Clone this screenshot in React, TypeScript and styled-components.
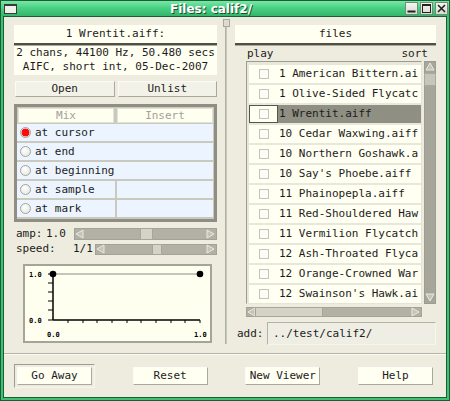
import React from 'react';
import styled, { createGlobalStyle } from 'styled-components';

const mono = `"DejaVu Sans Mono", "Liberation Mono", monospace`;

const GlobalStyle = createGlobalStyle`
  html, body {
    margin: 0;
    padding: 0;
    background: #ffffff;
  }
  body {
    font-family: ${mono};
    font-size: 11px;
    color: #1c1c1c;
  }
  * {
    box-sizing: border-box;
  }
`;

const Frame = styled.div`
  width: 450px;
  height: 401px;
  display: flex;
  flex-direction: column;
  background: #3fc174;
  border: 1px solid #1b5e36;
  padding: 0 2px 2px;
`;

const TitleBar = styled.div`
  height: 15px;
  margin: 0 -2px;
  padding: 0 1px 0 3px;
  display: flex;
  align-items: center;
  background: linear-gradient(#7ae8a6, #4ad184 45%, #33b56a);
`;

const WinIcon = styled.div`
  width: 13px;
  height: 10px;
  border: 1px solid #3a3a3a;
  border-top-width: 2px;
  background: #f0f0ea;
`;

const Title = styled.div`
  flex: 1;
  text-align: center;
  font-family: "DejaVu Sans", "Liberation Sans", sans-serif;
  font-weight: bold;
  font-size: 12px;
  color: #ffffff;
  text-shadow: 1px 1px 0 #1f4d30;
`;

const WinButtons = styled.div`
  display: flex;
  gap: 2px;
`;

const WinButton = styled.div`
  width: 13px;
  height: 13px;
  border: 1px solid #6b8f78;
  background: linear-gradient(#f6f6f0, #d9d9d0);
  display: flex;
  align-items: center;
  justify-content: center;
`;

const Body = styled.div`
  flex: 1;
  min-height: 0;
  display: flex;
  flex-direction: column;
  background: #edecdf;
  border: 1px solid #1b5e36;
`;

const Top = styled.div`
  height: 336px;
  display: flex;
  padding: 8px 9px 0 10px;
`;

const Column = styled.div<{ $width: number }>`
  width: ${(p) => p.$width}px;
  display: flex;
  flex-direction: column;
`;

const Heading = styled.div`
  height: 18px;
  line-height: 18px;
  text-align: center;
  background: #fffff2;
`;

const DoubleRule = styled.div`
  height: 3px;
  border-top: 2px solid #4f4f48;
  border-bottom: 1px solid #a9a99c;
`;

const Info = styled.div`
  height: 29px;
  line-height: 14px;
  text-align: center;
  background: #fffff2;
  white-space: nowrap;
`;

const ButtonPair = styled.div`
  margin-top: 6px;
  padding-left: 1px;
  display: grid;
  grid-template-columns: 1fr 1fr;
  gap: 3px;
`;

const FlatButton = styled.div`
  height: 16px;
  line-height: 14px;
  text-align: center;
  background: #f3f2e8;
  border: 1px solid;
  border-color: #fbfbf6 #a8a89c #a8a89c #fbfbf6;
`;

const Panel = styled.div`
  margin-top: 7px;
  height: 118px;
  border: 3px solid #8e8e84;
  background: #c9c9bd;
  padding: 1px;
  display: flex;
  flex-direction: column;
  gap: 2px;
`;

const PanelHead = styled.div`
  display: grid;
  grid-template-columns: 1fr 1fr;
  gap: 3px;
  margin-bottom: -1px;
`;

const HeadCell = styled.div`
  height: 15px;
  line-height: 14px;
  text-align: center;
  color: #a2a296;
  background: #fffff0;
  border: 1px solid #e2e2d6;
`;

const ModeRow = styled.div<{ $split?: boolean }>`
  height: 17px;
  display: grid;
  grid-template-columns: ${(p) => (p.$split ? '98px 1fr' : '1fr')};
  gap: 2px;
  margin-left: -1px;
`;

const ModeCell = styled.div`
  background: #ecf4ff;
  display: flex;
  align-items: center;
  padding-left: 3px;
  gap: 4px;
`;

const Radio = styled.span<{ $on?: boolean }>`
  width: 11px;
  height: 11px;
  border-radius: 50%;
  border: 1px solid #a4a49a;
  background: ${(p) =>
    p.$on
      ? 'radial-gradient(circle, #ff0a0a 0 3.6px, #f2dada 4.2px)'
      : 'radial-gradient(circle at 40% 35%, #ffffff, #e2e2dc)'};
`;

const SliderRow = styled.div<{ $top: number }>`
  margin-top: ${(p) => p.$top}px;
  display: flex;
  align-items: center;
  padding-left: 2px;
  white-space: pre;
`;

const Label = styled.span<{ $width: number }>`
  width: ${(p) => p.$width}px;
  line-height: 12px;
`;

const Value = styled.span<{ $width: number }>`
  width: ${(p) => p.$width}px;
  line-height: 12px;
`;

const Trough = styled.div<{ $width: number; $height: number }>`
  position: relative;
  width: ${(p) => p.$width}px;
  height: ${(p) => p.$height}px;
  background: #b1b1a5;
  border: 1px solid #a2a296;
  display: flex;
  justify-content: space-between;
  align-items: center;
`;

const Thumb = styled.div<{ $left: number; $size: number }>`
  position: absolute;
  top: -1px;
  bottom: -1px;
  left: ${(p) => p.$left}px;
  width: ${(p) => p.$size}px;
  background: #d3d3c7;
  border: 1px solid #a6a69a;
`;

const VTrough = styled.div`
  position: relative;
  width: 12px;
  background: #a6a69a;
  border: 1px solid #9c9c90;
  display: flex;
  flex-direction: column;
  justify-content: space-between;
  align-items: center;
`;

const VThumb = styled.div`
  position: absolute;
  left: -1px;
  right: -1px;
  top: 11px;
  height: 13px;
  background: #c6c6ba;
  border: 1px solid #aaa99e;
`;

const GraphBox = styled.div`
  margin: 9px 0 0 9px;
  width: 189px;
  height: 79px;
  background: #fffff0;
  border: 2px solid #a4a498;
`;

const Splitter = styled.div`
  width: 18px;
  margin-top: -6px;
  padding-bottom: 9px;
  display: flex;
  flex-direction: column;
  align-items: center;
`;

const Knob = styled.div`
  width: 7px;
  height: 8px;
  background: #dcdcd2;
  border: 1px solid #a8a89c;
`;

const SplitLine = styled.div`
  flex: 1;
  width: 2px;
  background: #c6c6ba;
  border-left: 1px solid #b0b0a4;
`;

const PlaySort = styled.div`
  height: 15px;
  line-height: 15px;
  padding: 0 8px 0 12px;
  display: flex;
  justify-content: space-between;
`;

const ListArea = styled.div`
  height: 243px;
  padding-left: 11px;
  display: flex;
  gap: 2px;
`;

const FileList = styled.div`
  width: 176px;
  background: #e7e7db;
  border: 1px solid;
  border-color: #9c9c90 #e4e4d8 #e4e4d8 #9c9c90;
  padding: 3px 0 0 2px;
  display: flex;
  flex-direction: column;
  gap: 2px;
  overflow: hidden;
`;

const FileRow = styled.div<{ $selected?: boolean }>`
  flex: none;
  height: 18px;
  display: grid;
  grid-template-columns: 29px 1fr;
  background: ${(p) => (p.$selected ? '#8f8f83' : '#fffff2')};
`;

const CheckCell = styled.div<{ $selected?: boolean }>`
  display: flex;
  align-items: center;
  justify-content: center;
  background: #fffff2;
  border: 1px solid ${(p) => (p.$selected ? '#55554d' : 'transparent')};
`;

const Check = styled.span`
  width: 10px;
  height: 10px;
  border: 1px solid #c4c4b8;
  background: #fcfcf6;
`;

const FileName = styled.div`
  padding-left: 1px;
  line-height: 18px;
  white-space: pre;
  overflow: hidden;
`;

const HScroll = styled.div`
  margin: 3px 0 0 11px;
`;

const AddRow = styled.div`
  margin-top: 5px;
  height: 23px;
  display: flex;
  align-items: center;
  padding-left: 2px;
`;

const AddLabel = styled.span`
  width: 30px;
`;

const AddInput = styled.div`
  flex: 1;
  height: 23px;
  line-height: 21px;
  padding-left: 5px;
  background: #efeee4;
  border: 1px solid;
  border-color: #b2b2a6 #f6f6ee #f6f6ee #b2b2a6;
`;

const HRule = styled.div`
  height: 2px;
  border-top: 1px solid #b4b4a8;
  border-bottom: 1px solid #fafaf4;
`;

const ButtonBar = styled.div`
  flex: 1;
  display: flex;
  align-items: center;
  justify-content: space-between;
  padding: 0 13px 0 10px;
`;

const DefaultRing = styled.div`
  padding: 2px;
  border: 1px solid;
  border-color: #9c9c90 #f6f6ee #f6f6ee #9c9c90;
`;

const Button = styled.div`
  width: 75px;
  height: 18px;
  line-height: 16px;
  text-align: center;
  background: #fffff2;
  border: 1px solid;
  border-color: #fdfdf8 #a8a89c #a8a89c #fdfdf8;
  white-space: nowrap;
`;

const Arrow = ({ dir }: { dir: 'left' | 'right' | 'up' | 'down' }) => {
  const pts = {
    left: '8,1 8,9 1,5',
    right: '1,1 1,9 8,5',
    up: '1,8 9,8 5,1',
    down: '1,1 9,1 5,8',
  }[dir];
  return (
    <svg width="10" height="10" viewBox="0 0 10 10">
      <polygon points={pts} fill="#c4c4b8" stroke="#e9e9e1" strokeWidth="1" />
    </svg>
  );
};

const Slider = ({ width, height, pos, size }: { width: number; height: number; pos: number; size: number }) => (
  <Trough $width={width} $height={height}>
    <Arrow dir="left" />
    <Thumb $left={pos} $size={size} />
    <Arrow dir="right" />
  </Trough>
);

const Graph = () => {
  const xTicks = [45, 60, 74, 89, 104, 118, 133, 148, 162, 177];
  const yTicks = [10, 19, 28, 37, 46, 56];
  const tickFont = { fontFamily: mono, fontSize: 7, fontWeight: 'bold' as const };
  return (
    <GraphBox>
      <svg width="185" height="75" viewBox="2 2 185 75">
        <line x1="30" y1="10" x2="177" y2="10" stroke="#8a8a80" strokeWidth="1" />
        <line x1="30" y1="10" x2="30" y2="56" stroke="#000" strokeWidth="1.5" />
        <line x1="30" y1="56" x2="177" y2="56" stroke="#000" strokeWidth="1.5" />
        {yTicks.map((y) => (
          <line key={y} x1="25" y1={y} x2="30" y2={y} stroke="#000" strokeWidth="1" />
        ))}
        {xTicks.map((x) => (
          <line key={x} x1={x} y1="56" x2={x} y2="59" stroke="#000" strokeWidth="1" />
        ))}
        <circle cx="30" cy="10" r="3.3" fill="#000" />
        <circle cx="177" cy="10" r="3.3" fill="#000" />
        <text x="6" y="12.5" {...tickFont}>1.0</text>
        <text x="6" y="58.5" {...tickFont}>0.0</text>
        <text x="24" y="73" {...tickFont}>0.0</text>
        <text x="171" y="73" {...tickFont}>1.0</text>
      </svg>
    </GraphBox>
  );
};

// names as far as the list column shows them
const files = [
  '1 American Bittern.ai',
  '1 Olive-Sided Flycatc',
  '1 Wrentit.aiff',
  '10 Cedar Waxwing.aiff',
  '10 Northern Goshawk.a',
  "10 Say's Phoebe.aiff",
  '11 Phainopepla.aiff',
  '11 Red-Shouldered Haw',
  '11 Vermilion Flycatch',
  '12 Ash-Throated Flyca',
  '12 Orange-Crowned War',
  "12 Swainson's Hawk.ai",
];

const modes = [
  { label: 'at cursor', on: true },
  { label: 'at end' },
  { label: 'at beginning' },
  { label: 'at sample', split: true },
  { label: 'at mark', split: true },
];

export default function App() {
  return (
    <>
      <GlobalStyle />
      <Frame>
        <TitleBar>
          <WinIcon />
          <Title>Files: calif2/</Title>
          <WinButtons>
            <WinButton>
              <svg width="9" height="9" viewBox="0 0 9 9">
                <rect x="0.5" y="6.5" width="8" height="2" fill="#222" />
              </svg>
            </WinButton>
            <WinButton>
              <svg width="9" height="9" viewBox="0 0 9 9">
                <rect x="0.5" y="0.5" width="8" height="8" fill="none" stroke="#222" strokeWidth="1" />
                <rect x="0.5" y="0.5" width="8" height="1.5" fill="#222" />
              </svg>
            </WinButton>
            <WinButton>
              <svg width="9" height="9" viewBox="0 0 9 9">
                <path d="M1 1 L8 8 M8 1 L1 8" stroke="#222" strokeWidth="1.6" />
              </svg>
            </WinButton>
          </WinButtons>
        </TitleBar>
        <Body>
          <Top>
            <Column $width={203}>
              <Heading>1 Wrentit.aiff:</Heading>
              <DoubleRule />
              <Info>
                2 chans, 44100 Hz, 50.480 secs
                <br />
                AIFC, short int, 05-Dec-2007
              </Info>
              <ButtonPair>
                <FlatButton>Open</FlatButton>
                <FlatButton>Unlist</FlatButton>
              </ButtonPair>
              <Panel>
                <PanelHead>
                  <HeadCell>Mix</HeadCell>
                  <HeadCell>Insert</HeadCell>
                </PanelHead>
                {modes.map((m) => (
                  <ModeRow key={m.label} $split={m.split}>
                    <ModeCell>
                      <Radio $on={m.on} />
                      {m.label}
                    </ModeCell>
                    {m.split && <ModeCell />}
                  </ModeRow>
                ))}
              </Panel>
              <SliderRow $top={6}>
                <Label $width={30}>amp:</Label>
                <Value $width={28}>1.0</Value>
                <Slider width={143} height={12} pos={65} size={13} />
              </SliderRow>
              <SliderRow $top={3}>
                <Label $width={57}>speed:</Label>
                <Value $width={22}>1/1</Value>
                <Slider width={122} height={11} pos={56} size={10} />
              </SliderRow>
              <Graph />
            </Column>
            <Splitter>
              <Knob />
              <SplitLine />
            </Splitter>
            <Column $width={201}>
              <Heading>files</Heading>
              <DoubleRule />
              <PlaySort>
                <span>play</span>
                <span>sort</span>
              </PlaySort>
              <ListArea>
                <FileList>
                  {files.map((f) => {
                    const sel = f === '1 Wrentit.aiff';
                    return (
                      <FileRow key={f} $selected={sel}>
                        <CheckCell $selected={sel}>
                          <Check />
                        </CheckCell>
                        <FileName>{f}</FileName>
                      </FileRow>
                    );
                  })}
                </FileList>
                <VTrough>
                  <Arrow dir="up" />
                  <VThumb />
                  <Arrow dir="down" />
                </VTrough>
              </ListArea>
              <HScroll>
                <Slider width={176} height={10} pos={8} size={68} />
              </HScroll>
              <AddRow>
                <AddLabel>add:</AddLabel>
                <AddInput>../test/calif2/</AddInput>
              </AddRow>
            </Column>
          </Top>
          <HRule />
          <ButtonBar>
            <DefaultRing>
              <Button>Go Away</Button>
            </DefaultRing>
            <Button>Reset</Button>
            <Button>New Viewer</Button>
            <Button>Help</Button>
          </ButtonBar>
        </Body>
      </Frame>
    </>
  );
}
